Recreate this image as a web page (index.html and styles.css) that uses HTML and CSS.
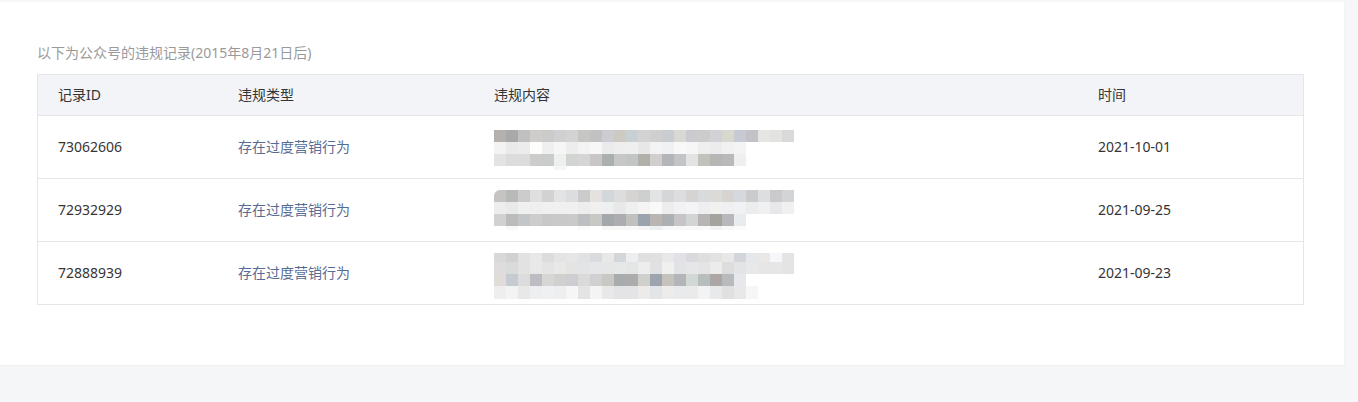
FILE: index.html
```html
<!DOCTYPE html>
<html lang="zh-CN">
<head>
<meta charset="utf-8">
<title>违规记录</title>
<link rel="stylesheet" href="styles.css">
</head>
<body>
<div class="page">
  <section class="card">
    <p class="caption">以下为公众号的违规记录(2015年8月21日后)</p>
    <div class="table">
      <div class="row head">
        <div class="cell">记录ID</div>
        <div class="cell">违规类型</div>
        <div class="cell">违规内容</div>
        <div class="cell">时间</div>
      </div>
      <div class="row">
        <div class="cell">73062606</div>
        <div class="cell link">存在过度营销行为</div>
        <div class="cell top"><div class="blob blob-1" data-blob="0"></div></div>
        <div class="cell">2021-10-01</div>
      </div>
      <div class="row">
        <div class="cell">72932929</div>
        <div class="cell link">存在过度营销行为</div>
        <div class="cell top"><div class="blob blob-2" data-blob="1"></div></div>
        <div class="cell">2021-09-25</div>
      </div>
      <div class="row">
        <div class="cell">72888939</div>
        <div class="cell link">存在过度营销行为</div>
        <div class="cell top"><div class="blob blob-3" data-blob="2"></div></div>
        <div class="cell">2021-09-23</div>
      </div>
    </div>
  </section>
</div>
<script src="script.js"></script>
</body>
</html>
```
FILE: styles.css
```css
* { box-sizing: border-box; }
html, body {
  margin: 0;
  padding: 0;
  background: #f5f6f8;
  font-family: "Noto Sans", "Noto Sans CJK SC", sans-serif;
  font-size: 14px;
  color: #353535;
}
.page {
  width: 1358px;
  height: 402px;
  padding-top: 2px;
}
.card {
  width: 1344px;
  height: 363px;
  background: #fff;
  padding: 41px 40px 0 37px;
  box-shadow: 0 1px 2px rgba(0,0,0,0.04);
}
.caption {
  margin: 0 0 11px;
  line-height: 20px;
  color: #9a9a9a;
}
.table {
  border: 1px solid #e5e6ea;
  border-bottom: none;
}
.row {
  display: grid;
  grid-template-columns: 180px 256px 604px 1fr;
  height: 63px;
  border-bottom: 1px solid #e5e6ea;
  align-items: center;
}
.row.head {
  height: 41px;
  background: #f3f4f7;
}
.cell {
  padding: 0 20px;
  line-height: 20px;
  white-space: nowrap;
}
.cell.top {
  align-self: start;
}
.link { color: #576b95; }
.blob { display: flex; flex-direction: column; }
.blob-1 { margin-top: 14px; }
.blob-2 { margin-top: 11px; }
.blob-3 { margin-top: 11px; }
.brow { display: flex; }
.bcell { width: 12px; flex: none; }
.blob-2 .brow:first-child .bcell:first-child { border-top-left-radius: 6px; }
```
FILE: script.js
```js
(function () {
  var data = [
    [
      [12, "b4b0ae a8aaa9 c0c0c0 cecdcc cbccca cfd0d2 d3d3d3 c6c6c2 c2c2c2 cbcdd0 cdc9c3 c9d0d3 d3d3d6 cfcfd0 c9cdd1 d9d8d5 cacbce cccccc d1d2d5 d9d8cf c7c9d3 c4c2c6 e5e5e3 e3e4e2 d9d9dc"],
      [12, "f3f3f3 e9eaeb ececec fdfdfb efefef f6f6f4 ededed f3f3f4 f7f7f7 eaebec eeeeee efefef e8e7e8 f3f3f3 f0f1f2 f8f8f8 f6f6f6 eeeeee ececec f1f1f1 f4f4f4"],
      [12, "e3e3e3 dddcdc dcdcdc cccccb c9cbcc eef0ef d2d4d2 d6d5d5 c8c6c6 abb0ae c7c7c5 c2c5c6 b3b0ab d0cfcd b4b5b8 c3c4c6 e3e3e3 c2c2bc b8b6b4 b9b9bc eef0ef"],
      [4, "- - - - - f4f5f4"]
    ],
    [
      [12, "c6c4c2 b8bab9 cccccc dfdfdf d2d2d2 e2e3e5 dcdde0 cbcbcb e5e1df d2d7d9 dddddd d5d4d3 cdd0ce e2e3e5 d5d6d9 dddde0 d6d3d3 d8dadc dbdad6 d6d3d1 d5d9de cbcbcb dcdee0 cacacc d3d4d6"],
      [12, "ededed e8eaea f0f0f0 efefef f0f0f0 f0f0f0 f0f0f0 ededed f0f0f0 eeeff0 e8e8e9 eeefef f5f4f2 f8f9f8 eeeced f1f2f3 f4f4f6 eceef0 f1f1f0 f0f0f2 f0f1f3 ececec eff0f1 e8e8ea f0f0f0"],
      [12, "d1d1d1 bbbbbb c2c6c8 cdcdcd c8c8c8 c9c9c9 cacaca bbbfc1 c8c8c4 a4a8aa adacb1 c0c0bc 9ba4ae b8b5b3 adb0b2 c7c4c8 d3d5d4 b6b4b4 a5a39e b8b8bc e9ecef"],
      [4, "- f8f8f8 - - - - - fafafa - f7f7f8 f7f7f7 f8f8f8 f5f5f5 eeeff0 f7f8f9 f8f8f8 f8f8f8 f9f9f9 f2f2f2 f8f8f8 fbfbfb"]
    ],
    [
      [9, "d8d8d8 d0d2d2 e2e2e2 e8e8e8 dcdcdc e4e4e4 e6e6e6 e0e2e4 d9dbde e8e8e8 d3d7da eceeef e0e0e0 e0e0e0 e8e8e8 e2e2e6 d9dade dfdfdf e2e2e0 e8e8e6 d2d6da e4e8ea e9e8e6 f5f7fa e4e4e4"],
      [12, "dedcdc d9dbd9 e2e2e2 e8e8e8 e4e4e4 e8e8e6 e4e4e2 e2e4e6 e4e6e8 e6e6e6 e6e8e8 e4e6e6 ecedec dfe1e2 f0f0ee e2e3e6 e6e6e8 e4e4e4 ececec dddddd e2e4e6 e8e8e8 e6e6e6 e6e6e6 e4e4e4"],
      [12, "e0dcda c4ccd2 dcdcdc bdbcc2 d6d6d4 d0d0cf ccced2 dadada cfd0cf c9c8c4 a7acae aeabad cfcfcc 9ca4ae c6c3bf b4b5b8 d3d7d6 b8bdbd aca7a4 b8bbbd e7e8ec"],
      [13, "eeeeee f2f4f2 e8e8e8 eceeef eff0f2 eeeef0 f6f6f6 e4e4e4 f4f4f4 e8e8e8 e4e4e6 e4e4e6 ecebea e2e4e7 edeceb e9eaec eaeaea f3f3f3 e8e9ea e0e0e0 e8e8e8 f6f6f6"]
    ]
  ];
  var blobs = document.querySelectorAll('.blob');
  blobs.forEach(function (el) {
    var rows = data[+el.getAttribute('data-blob')];
    rows.forEach(function (r) {
      var row = document.createElement('div');
      row.className = 'brow';
      row.style.height = r[0] + 'px';
      r[1].split(' ').forEach(function (c) {
        var cell = document.createElement('span');
        cell.className = 'bcell';
        if (c !== '-') cell.style.background = '#' + c;
        row.appendChild(cell);
      });
      el.appendChild(row);
    });
  });
})();
```
